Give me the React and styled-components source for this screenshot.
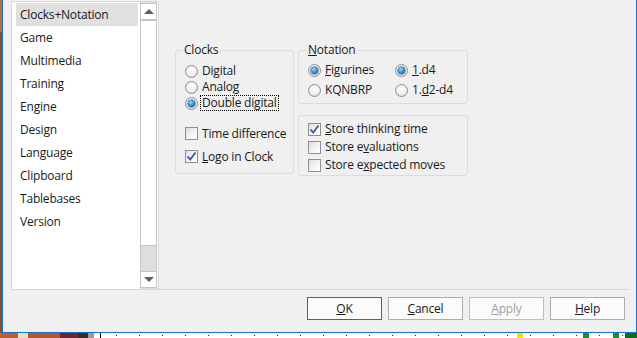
import React from "react";
import styled, { createGlobalStyle } from "styled-components";

const GlobalStyle = createGlobalStyle`
  html, body { margin: 0; padding: 0; background: #ffffff; }
  body {
    font-family: "Open Sans", "Noto Sans", sans-serif;
    font-size: 12px;
    color: #1a1a1a;
  }
  * { box-sizing: border-box; }
`;

const Screen = styled.div`
  width: 637px;
  height: 338px;
  overflow: hidden;
  display: flex;
  flex-direction: column;
`;

const TopRow = styled.div`
  display: flex;
  height: 333px;
`;

const DesktopEdge = styled.div`
  width: 2px;
  background: linear-gradient(#c2672f 0 32px, #8f4c2c 32px);
`;

const Dialog = styled.div`
  width: 635px;
  height: 333px;
  border: 1px solid #1672d6;
  border-top: none;
  background: #f0f0f0;
  display: flex;
  flex-direction: column;
`;

const Sheet = styled.div`
  margin: 1px 0 0 8px;
  width: 618px;
  height: 289px;
  border-bottom: 1px solid #d8d8d8;
  display: flex;
`;

/* ---------- left page list ---------- */

const ListFrame = styled.div`
  width: 148px;
  height: 288px;
  border: 1px solid #d9d9d9;
  border-bottom: none;
  display: flex;
  background: #ffffff;
`;

const ListBox = styled.ul`
  list-style: none;
  margin: 0;
  padding: 1px 2px 0 4px;
  width: 128px;
`;

const Item = styled.li`
  height: 23px;
  line-height: 23px;
  padding-left: 4px;
  letter-spacing: -0.2px;
  background: ${(p) => (p.selected ? "#e0e0e0" : "transparent")};
`;

const ScrollBar = styled.div`
  width: 17px;
  margin-right: 1px;
  border-left: 1px solid #c4c4c4;
  border-right: 1px solid #c4c4c4;
  padding: 1px 0;
  display: flex;
  flex-direction: column;
  background: #dedede;
`;

const ArrowButton = styled.div`
  height: 17px;
  background: #ffffff;
  border-top: 1px solid #c4c4c4;
  border-bottom: 1px solid #c4c4c4;
  display: flex;
  align-items: center;
  justify-content: center;
  &::after {
    content: "";
    border-left: 5px solid transparent;
    border-right: 5px solid transparent;
    ${(p) =>
      p.down
        ? "border-top: 5px solid #606060;"
        : "border-bottom: 5px solid #606060;"}
  }
`;

const Thumb = styled.div`
  height: 226px;
  background: #ffffff;
  border-top: 1px solid #c4c4c4;
  border-bottom: 1px solid #c4c4c4;
`;

const Track = styled.div`
  flex: 1;
`;

/* ---------- right page ---------- */

const Page = styled.div`
  flex: 1;
  display: flex;
  align-items: flex-start;
  gap: 4px;
  padding: 41px 0 0 16px;
`;

const Column = styled.div`
  display: flex;
  flex-direction: column;
  gap: 11px;
`;

const Group = styled.fieldset`
  margin: 0;
  min-inline-size: 0;
  width: ${(p) => p.w}px;
  border: 1px solid #dcdcdc;
  border-radius: 3px;
  padding: ${(p) => p.pad};
`;

const Legend = styled.legend`
  margin-left: ${(p) => p.ml}px;
  padding: 0 2px;
  line-height: 16px;
  letter-spacing: -0.2px;
`;

const Box = styled.div`
  width: 170px;
  border: 1px solid #dcdcdc;
  border-radius: 3px;
  padding: 4px 0 1px 9px;
`;

const Row = styled.div`
  height: ${(p) => p.h || 16}px;
  display: flex;
  align-items: center;
  gap: 2px;
`;

const Spacer = styled.div`
  height: 11px;
`;

const Grid = styled.div`
  display: grid;
  grid-template-columns: 87px auto;
  row-gap: 4px;
`;

const RadioDot = styled.span`
  position: relative;
  flex: none;
  width: 13px;
  height: 13px;
  border-radius: 50%;
  border: 1px solid #8e8f8f;
  background: radial-gradient(circle at 50% 40%, #ffffff 0%, #f2f2f2 45%, #d4d4d4 100%);
  &::after {
    content: "";
    display: ${(p) => (p.checked ? "block" : "none")};
    position: absolute;
    left: 2px;
    top: 2px;
    width: 7px;
    height: 7px;
    border-radius: 50%;
    background: radial-gradient(circle at 40% 35%, #a8e0fb 0%, #3b9ad8 40%, #0d4f86 100%);
    box-shadow: 0 0 0 0.5px #1c3f63;
  }
`;

const CheckSquare = styled.span`
  flex: none;
  width: 13px;
  height: 13px;
  border: 1px solid #8e8f8f;
  background: linear-gradient(135deg, #dcdcdc 0%, #f6f6f6 60%, #ffffff 100%);
  display: flex;
  align-items: center;
  justify-content: center;
`;

const Label = styled.span`
  padding: 0 1px;
  line-height: 14px;
  letter-spacing: -0.2px;
  white-space: nowrap;
  border: 1px dotted ${(p) => (p.focused ? "#000000" : "transparent")};
`;

/* ---------- buttons ---------- */

const ButtonRow = styled.div`
  display: flex;
  justify-content: flex-end;
  gap: 6px;
  padding: 7px 11px 0 0;
`;

const Button = styled.button`
  width: 75px;
  height: 23px;
  padding: 0;
  font-family: inherit;
  font-size: 12px;
  letter-spacing: -0.2px;
  background: #fbfbfb;
  color: ${(p) => (p.disabled ? "#a0a0a0" : "#1a1a1a")};
  border: 1px solid ${(p) => (p.primary ? "#0078d7" : p.disabled ? "#bfbfbf" : "#adadad")};
`;

/* ---------- desktop behind ---------- */

const DesktopStrip = styled.div`
  height: 5px;
  display: flex;
`;

const Patch = styled.div`
  width: ${(p) => p.w}px;
  margin-right: ${(p) => p.mr || 0}px;
  background: ${(p) => p.bg};
`;

const Ruler = styled.div`
  flex: 1;
  border-left: 1px solid #000000;
  background:
    repeating-linear-gradient(90deg, transparent 0 15px, #222 15px 16px, transparent 16px 23px)
      0 2px / 100% 1px no-repeat,
    #ffffff;
  display: flex;
  justify-content: flex-end;
`;

const Check = () => (
  <svg width="11" height="11" viewBox="0 0 11 11">
    <path d="M1.5 5.5 L4.2 8.5 L9.5 1.5" fill="none" stroke="#3f5597" strokeWidth="1.8" />
  </svg>
);

const Radio = ({ checked, focused, children }) => (
  <Row>
    <RadioDot checked={checked} />
    <Label focused={focused}>{children}</Label>
  </Row>
);

const CheckBox = ({ checked, h, children }) => (
  <Row h={h}>
    <CheckSquare>{checked && <Check />}</CheckSquare>
    <Label>{children}</Label>
  </Row>
);

const pages = [
  "Clocks+Notation",
  "Game",
  "Multimedia",
  "Training",
  "Engine",
  "Design",
  "Language",
  "Clipboard",
  "Tablebases",
  "Version",
];

export default function App() {
  return (
    <Screen>
      <GlobalStyle />
      <TopRow>
        <DesktopEdge />
        <Dialog>
          <Sheet>
            <ListFrame>
              <ListBox>
                {pages.map((p, i) => (
                  <Item key={p} selected={i === 0}>
                    {p}
                  </Item>
                ))}
              </ListBox>
              <ScrollBar>
                <ArrowButton />
                <Thumb />
                <Track />
                <ArrowButton down />
              </ScrollBar>
            </ListFrame>

            <Page>
              <Group w={119} pad="5px 0 5px 9px">
                <Legend ml={-3}>Clocks</Legend>
                <Radio>Digital</Radio>
                <Radio>Analog</Radio>
                <Radio checked focused>Double digital</Radio>
                <Spacer />
                <CheckBox h={23}>Time difference</CheckBox>
                <CheckBox h={23} checked>
                  <u>L</u>ogo in Clock
                </CheckBox>
              </Group>

              <Column>
                <Group w={170} pad="4px 0 5px 9px">
                  <Legend ml={-2}>
                    <u>N</u>otation
                  </Legend>
                  <Grid>
                    <Radio checked>
                      <u>F</u>igurines
                    </Radio>
                    <Radio checked>
                      <u>1</u>.d4
                    </Radio>
                    <Radio>KQNBRP</Radio>
                    <Radio>
                      1.<u>d</u>2-d4
                    </Radio>
                  </Grid>
                </Group>

                <Box>
                  <CheckBox h={18} checked>
                    <u>S</u>tore thinking time
                  </CheckBox>
                  <CheckBox h={18}>
                    Store e<u>v</u>aluations
                  </CheckBox>
                  <CheckBox h={18}>
                    Store e<u>x</u>pected moves
                  </CheckBox>
                </Box>
              </Column>
            </Page>
          </Sheet>

          <ButtonRow>
            <Button primary>
              <u>O</u>K
            </Button>
            <Button>
              <u>C</u>ancel
            </Button>
            <Button disabled>
              <u>A</u>pply
            </Button>
            <Button>
              <u>H</u>elp
            </Button>
          </ButtonRow>
        </Dialog>
      </TopRow>

      <DesktopStrip>
        <Patch w={18} bg="#b9602f" />
        <Patch w={10} bg="#e6dfcf" />
        <Patch w={32} bg="#b4572c" />
        <Patch w={18} bg="#6d2430" />
        <Patch w={10} bg="#3b2b2b" />
        <Patch w={6} bg="#9a9a9a" />
        <Patch w={6} bg="#ffffff" />
        <Ruler>
          <Patch w={6} bg="#f2e600" mr={60} />
          <Patch w={6} bg="#1b8f2a" mr={24} />
          <Patch w={6} bg="#1b8f2a" mr={6} />
          <Patch w={12} bg="#0d6b1c" />
        </Ruler>
      </DesktopStrip>
    </Screen>
  );
}
